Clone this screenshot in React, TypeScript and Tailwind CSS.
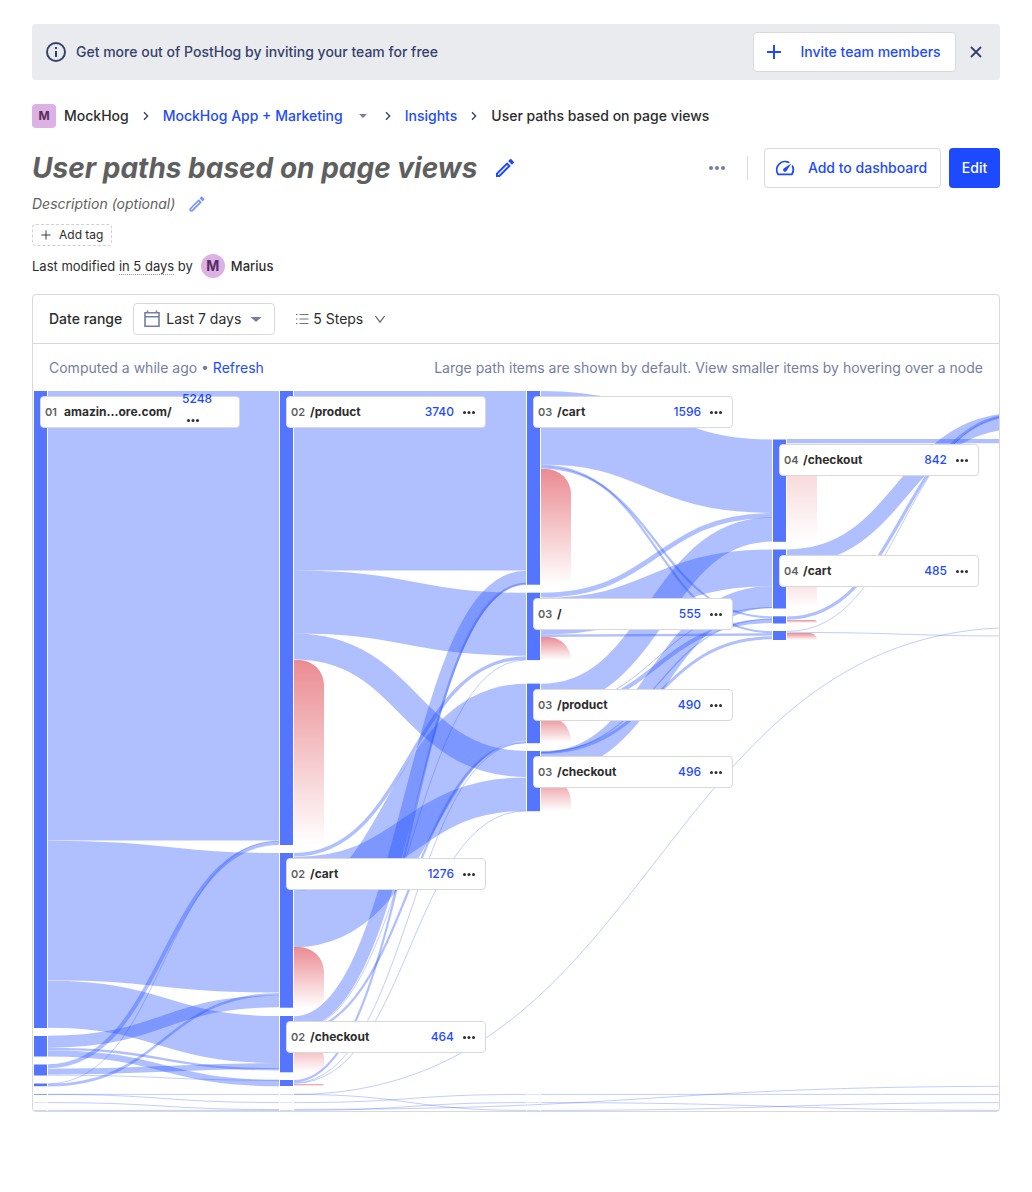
import React from 'react';

type Band = [column: number, top: number, height: number];
type Flow = [fromColumn: number, fromY: number, toColumn: number, toY: number, weight: number];

const COLUMN_X = [1, 247, 494, 740, 986];
const BAR_WIDTH = 13;

const BARS: Band[] = [
  [0, 0, 637], [0, 645, 20.5], [0, 673.5, 11], [0, 692.5, 2.7], [0, 703, 0.7], [0, 711.5, 0.2], [0, 719.4, 0.3],
  [1, 0, 454], [1, 462, 154.7], [1, 625, 56.3], [1, 689, 6], [1, 703, 0.3], [1, 711.5, 0.2], [1, 719.4, 0.3],
  [2, 0, 193.7], [2, 201.7, 67.4], [2, 292.6, 59.6], [2, 360, 60.2], [2, 703, 0.2], [2, 711.5, 0.2], [2, 719.4, 0.3],
  [3, 48.5, 102.3], [3, 158.5, 59], [3, 225.3, 7.2], [3, 240, 9],
];

const FLOWS: Flow[] = [
  [0, 224.8, 1, 224.8, 449.5],
  [0, 519.5, 1, 531.8, 139.5],
  [0, 613.3, 1, 648.6, 47],
  [0, 650.8, 1, 610.3, 12],
  [0, 657.8, 1, 678.3, 2.3],
  [0, 662.3, 1, 692, 6.3],
  [0, 675.3, 1, 452, 4],
  [0, 680.6, 1, 675, 5.8],
  [0, 684.2, 1, 689.3, 0.8],
  [0, 692.8, 1, 450, 0.8],
  [0, 694.2, 1, 603.2, 2.6],
  [0, 703.4, 1, 703.4, 0.8],
  [0, 703.4, 1, 711.5, 0.8],
  [0, 711.6, 1, 718.6, 0.8],
  [0, 719.4, 1, 719.4, 0.8],
  [1, 89.8, 2, 89.8, 179.5],
  [1, 211, 2, 233.3, 63],
  [1, 255.6, 2, 373, 26],
  [1, 463.8, 2, 267, 3.4],
  [1, 482.6, 2, 403.2, 33.4],
  [1, 527.8, 2, 321.3, 57],
  [1, 632, 2, 186.5, 13.6],
  [1, 639.4, 2, 269, 0.8],
  [1, 641, 2, 351, 2.2],
  [1, 690.2, 2, 192.8, 2.2],
  [1, 691.8, 2, 351.8, 0.8],
  [1, 692.4, 2, 420, 0.8],
  [1, 703.4, 2, 719.4, 0.8],
  [1, 711.6, 2, 703.4, 0.8],
  [1, 719.4, 2, 711.6, 0.8],
  [1, 703.4, 4, 236.5, 0.8],
  [1, 718.4, 4, 695.3, 0.8],
  [2, 36.8, 3, 85.2, 73.4],
  [2, 74.6, 3, 241.3, 2.2],
  [2, 76.6, 3, 226.4, 2.2],
  [2, 204.2, 3, 124.4, 4.8],
  [2, 225.2, 3, 176.8, 36.6],
  [2, 244.8, 3, 243.4, 2.4],
  [2, 305, 3, 138.4, 24.4],
  [2, 317.8, 3, 216.6, 1],
  [2, 320.2, 3, 230, 4.2],
  [2, 371.8, 3, 206, 21.8],
  [2, 361.4, 3, 228, 1.2],
  [2, 361.6, 3, 246.8, 3],
  [2, 703.4, 4, 703.4, 0.8],
  [2, 711.6, 4, 719.4, 0.8],
  [2, 719.4, 4, 711.6, 0.8],
  [3, 50.2, 4, 50.2, 4.2],
  [3, 166.4, 4, 30, 16],
  [3, 227.2, 4, 24, 3.2],
  [3, 240.4, 4, 24, 0.8],
  [3, 241.4, 4, 245, 0.8],
];

const DROPOFFS: Band[] = [
  [1, 269, 185], [1, 556, 61], [1, 643, 38], [1, 693, 2],
  [2, 78, 116], [2, 246, 23], [2, 325, 27], [2, 386, 34],
  [3, 229, 3], [3, 242, 7],
];

const FAINT_DROPOFFS: Band[] = [
  [3, 53, 98], [3, 174, 43],
];

const PAGES = [
  { column: 0, top: 0, step: '01', name: 'amazin...ore.com/', count: 5248 },
  { column: 1, top: 0, step: '02', name: '/product', count: 3740 },
  { column: 1, top: 462, step: '02', name: '/cart', count: 1276 },
  { column: 1, top: 625, step: '02', name: '/checkout', count: 464 },
  { column: 2, top: 0, step: '03', name: '/cart', count: 1596 },
  { column: 2, top: 202, step: '03', name: '/', count: 555 },
  { column: 2, top: 293, step: '03', name: '/product', count: 490 },
  { column: 2, top: 360, step: '03', name: '/checkout', count: 496 },
  { column: 3, top: 48, step: '04', name: '/checkout', count: 842 },
  { column: 3, top: 159, step: '04', name: '/cart', count: 485 },
];

function flowPath([from, y0, to, y1]: Flow) {
  const x0 = COLUMN_X[from] + BAR_WIDTH + 1;
  const x1 = COLUMN_X[to] - 1;
  const mid = (x0 + x1) / 2;
  return `M${x0},${y0}C${mid},${y0} ${mid},${y1} ${x1},${y1}`;
}

function dropoffPath([column, top, height]: Band) {
  const x = COLUMN_X[column] + BAR_WIDTH + 1;
  const r = Math.min(height, 25);
  return `M${x},${top}h${30 - r}a${r},${r} 0 0 1 ${r},${r}v${height - r}h-30z`;
}

const PENCIL =
  'M14.06 9.02l.92.92L5.92 19H5v-.92l9.06-9.06M17.66 3c-.25 0-.51.1-.7.29l-1.83 1.83 3.75 3.75 1.83-1.83c.39-.39.39-1.02 0-1.41l-2.34-2.34c-.2-.2-.45-.29-.71-.29zm-3.6 3.19L3 17.25V21h3.75L17.81 9.94l-3.75-3.75z';

const GAUGE =
  'M20.38 8.57l-1.23 1.85a8 8 0 0 1-.22 7.58H5.07A8 8 0 0 1 15.58 6.85l1.85-1.23A10 10 0 0 0 3.35 19a2 2 0 0 0 1.72 1h13.85a2 2 0 0 0 1.74-1 10 10 0 0 0-.27-10.44zm-9.79 6.84a2 2 0 0 0 2.83 0l5.66-8.49-8.49 5.66a2 2 0 0 0 0 2.83z';

function Glyph({ d, className }: { d: string; className: string }) {
  return (
    <svg viewBox="0 0 24 24" fill="currentColor" aria-hidden="true" className={className}>
      <path d={d} />
    </svg>
  );
}

function Stroke({ d, className, width = 2 }: { d: string; className: string; width?: number }) {
  return (
    <svg viewBox="0 0 24 24" fill="none" stroke="currentColor" strokeWidth={width} aria-hidden="true" className={className}>
      <path d={d} />
    </svg>
  );
}

function Dots({ className }: { className: string }) {
  return (
    <svg viewBox="0 0 16 4" fill="currentColor" aria-hidden="true" className={className}>
      <circle cx="2" cy="2" r="2" />
      <circle cx="8" cy="2" r="2" />
      <circle cx="14" cy="2" r="2" />
    </svg>
  );
}

function Banner() {
  return (
    <div className="flex items-center rounded bg-[#eaebef] px-3 py-2 text-[#35416b]">
      <svg viewBox="0 0 24 24" fill="none" stroke="currentColor" strokeWidth="2" aria-hidden="true" className="size-6 shrink-0">
        <circle cx="12" cy="12" r="9" />
        <path d="M12 11v6M12 7v2" />
      </svg>
      <p className="ml-2 flex-1 font-medium">Get more out of PostHog by inviting your team for free</p>
      <button className="flex h-10 min-w-[203px] items-center gap-2 rounded border border-[#d9d9d9] bg-white px-2 font-medium text-[#1d4aff]">
        <Stroke d="M12 5v14M5 12h14" className="size-6" />
        <span className="flex-1">Invite team members</span>
      </button>
      <button aria-label="Dismiss" className="ml-2 flex size-6 items-center justify-center">
        <Stroke d="M6 6l12 12M18 6L6 18" width={2.2} className="size-5" />
      </button>
    </div>
  );
}

function Chevron() {
  return <Stroke d="M9 6.500l5.500 5.500L9 17.500" className="mx-[9px] size-4 text-[#35416b]" />;
}

function Breadcrumbs() {
  return (
    <nav aria-label="Breadcrumb" className="mt-6 flex h-6 items-center font-medium">
      <span className="flex size-6 items-center justify-center rounded bg-[#dcb1e3] text-xs font-bold text-[#572e5e]">M</span>
      <span className="ml-2">MockHog</span>
      <Chevron />
      <a href="#project" className="text-[#1d4aff]">MockHog App + Marketing</a>
      <button aria-label="Switch project" className="ml-3 text-[#747ea2]">
        <Glyph d="M6 9h12l-6 6z" className="size-4" />
      </button>
      <Chevron />
      <a href="#insights" className="text-[#1d4aff]">Insights</a>
      <Chevron />
      <span>User paths based on page views</span>
    </nav>
  );
}

function Heading() {
  return (
    <header className="mt-5">
      <div className="flex h-10 items-center">
        <h1 className="text-[28px] leading-10 font-bold text-[#5f5f5f] italic">User paths based on page views</h1>
        <button aria-label="Edit title" className="ml-4 text-[#1d4aff]">
          <Glyph d={PENCIL} className="size-6" />
        </button>
        <div className="ml-auto flex items-center">
          <button aria-label="More actions" className="text-[#747ea2]">
            <Dots className="h-1 w-4" />
          </button>
          <span className="mr-4 ml-[22px] h-6 w-px bg-[#d9d9d9]" />
          <button className="flex h-10 min-w-[177px] items-center gap-2 rounded border border-[#d9d9d9] bg-white px-[9px] font-medium text-[#1d4aff]">
            <Glyph d={GAUGE} className="size-[22px]" />
            <span className="flex-1">Add to dashboard</span>
          </button>
          <button className="ml-2 h-10 min-w-[51px] rounded bg-[#1d4aff] px-3 font-medium text-white">Edit</button>
        </div>
      </div>
      <div className="mt-1 flex h-6 items-center">
        <p className="text-[#5f5f5f] italic">Description (optional)</p>
        <button aria-label="Edit description" className="ml-3 text-[#1d4aff]/60">
          <Glyph d={PENCIL} className="size-5" />
        </button>
      </div>
      <button className="mt-2 flex h-[22px] items-center gap-2 rounded border border-dashed border-[#d0d0d0] px-2 text-xs">
        <Stroke d="M12 1v22M1 12h22" width={2.2} className="size-[10px]" />
        Add tag
      </button>
      <p className="mt-2 flex h-6 items-center text-[13px]">
        <span>
          Last modified <span className="border-b border-dotted border-[#999]">in 5 days</span> by
        </span>
        <span className="mr-1.5 ml-2 flex size-6 items-center justify-center rounded-full bg-[#dcb1e3] text-sm font-bold text-[#572e5e]">M</span>
        <span className="font-medium">Marius</span>
      </p>
    </header>
  );
}

function Filters() {
  return (
    <div className="flex h-[49px] items-center border-b border-[#d9d9d9] px-4">
      <span className="font-medium">Date range</span>
      <button className="ml-[11px] flex h-8 min-w-[142px] items-center rounded border border-[#d9d9d9] px-2">
        <svg viewBox="0 0 20 20" fill="none" stroke="#747ea2" strokeWidth="1.600" aria-hidden="true" className="size-5">
          <path d="M3 3.800h14V17.200H3zM3 7.800h14M5.500 4V1.500M14.500 4V1.500" />
        </svg>
        <span className="ml-1">Last 7 days</span>
        <Glyph d="M5.500 9.500h13L12 15.500z" className="ml-auto size-5 text-[#747ea2]" />
      </button>
      <label className="ml-5 flex items-center">
        <svg viewBox="0 0 14 14" fill="none" stroke="#777" strokeWidth="1.200" aria-hidden="true" className="size-[14px]">
          <path d="M4.500 2.500h9M4.500 7h9M4.500 11.500h9M1 2.500h1.500M1 7h1.500M1 11.500h1.500" />
        </svg>
        <select aria-label="Number of steps" className="ml-1 w-[60px] appearance-none bg-transparent">
          <option>5 Steps</option>
        </select>
        <Stroke d="M4 6.500l8 11 8-11" width={2} className="size-[14px] text-[#666]" />
      </label>
    </div>
  );
}

function PageCard({ column, top, step, name, count }: (typeof PAGES)[number]) {
  const wraps = name.length > 12;
  return (
    <div
      className="absolute flex h-8 w-[200px] items-center rounded border border-[#d9d9d9] bg-white px-1 text-xs"
      style={{ left: COLUMN_X[column] + 6, top: top + 5 }}
    >
      <span className="w-[19px] text-[11px] font-semibold text-[#5f5f5f]">{step}</span>
      {wraps ? (
        <>
          <span className="w-[118px] font-bold">{name}</span>
          <span className="flex h-[42px] flex-col">
            <a href="#persons" className="font-medium text-[#1d4aff]">{count}</a>
            <button aria-label="Path options" className="ml-1 flex h-7 items-center">
              <Dots className="h-[3px] w-[14px]" />
            </button>
          </span>
        </>
      ) : (
        <>
          <span className="font-bold">{name}</span>
          <a href="#persons" className="ml-auto font-medium text-[#1d4aff]">{count}</a>
          <button aria-label="Path options" className="mr-[5px] ml-2 flex h-6 items-center">
            <Dots className="h-[3px] w-[14px]" />
          </button>
        </>
      )}
    </div>
  );
}

function PathsChart() {
  return (
    <div className="relative overflow-hidden">
      <svg viewBox="0 0 1240 720" aria-label="User paths" className="block h-[720px] w-[1240px] max-w-none">
        <defs>
          <linearGradient id="dropoff" x1="0" y1="0" x2="0" y2="1">
            <stop offset="0" stopColor="#db3743" stopOpacity="0.58" />
            <stop offset="1" stopColor="#db3743" stopOpacity="0" />
          </linearGradient>
        </defs>
        {DROPOFFS.map((band, i) => (
          <path key={i} d={dropoffPath(band)} fill="url(#dropoff)" />
        ))}
        {FAINT_DROPOFFS.map((band, i) => (
          <path key={i} d={dropoffPath(band)} fill="url(#dropoff)" opacity="0.46" />
        ))}
        {FLOWS.map((flow, i) => (
          <path key={i} d={flowPath(flow)} fill="none" stroke="#1d4aff" strokeOpacity="0.35" strokeWidth={flow[4]} />
        ))}
        {BARS.map(([column, top, height], i) => (
          <rect key={i} x={COLUMN_X[column]} y={top} width={BAR_WIDTH} height={height} fill="#5375ff" />
        ))}
      </svg>
      {PAGES.map((page, i) => (
        <PageCard key={i} {...page} />
      ))}
    </div>
  );
}

export default function App() {
  return (
    <main className="px-8 pt-6 pb-20 font-['Inter',sans-serif] text-sm text-[#2d2d2d]">
      <Banner />
      <Breadcrumbs />
      <Heading />
      <section className="mt-4 overflow-hidden rounded border border-[#d9d9d9]">
        <Filters />
        <div className="flex h-[47px] items-center justify-between px-4 text-[#747ea2]">
          <p>
            Computed a while ago • <a href="#refresh" className="text-[#1d4aff]">Refresh</a>
          </p>
          <p>Large path items are shown by default. View smaller items by hovering over a node</p>
        </div>
        <PathsChart />
      </section>
    </main>
  );
}
